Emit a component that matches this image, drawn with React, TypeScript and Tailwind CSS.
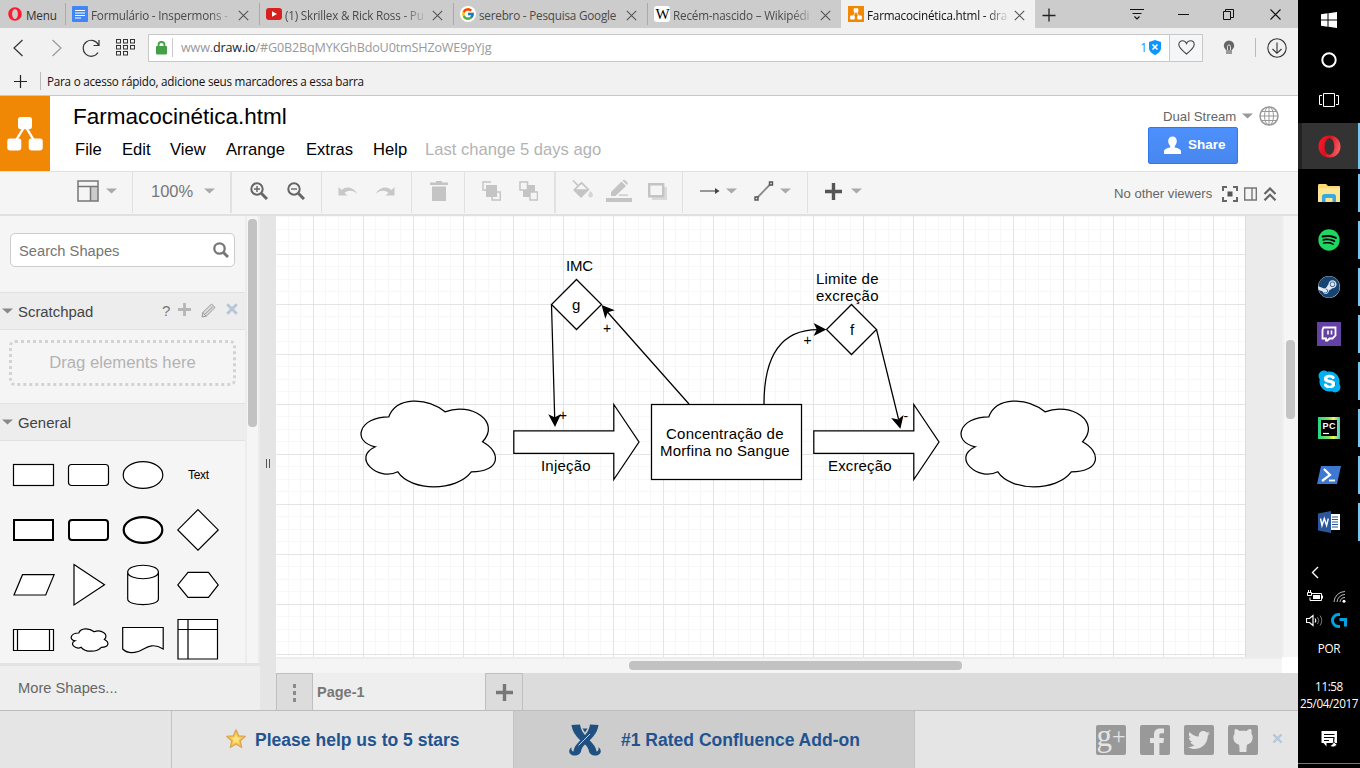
import React from "react";
import { FaSpotify, FaSteam, FaSkype, FaTwitter } from "react-icons/fa";
import { FcGoogle } from "react-icons/fc";

const uiFont = "font-['Open_Sans','Noto_Sans',sans-serif]";

function TabClose() {
  return (
    <svg width="11" height="11" viewBox="0 0 11 11" className="shrink-0">
      <path d="M.8 .8l9.400 9.400M10.200 .8L.8 10.200" stroke="#555" strokeWidth="1.100" fill="none" />
    </svg>
  );
}

function Tab({ icon, title, active = false, fade = false }: { icon: React.ReactNode; title: string; active?: boolean; fade?: boolean }) {
  return (
    <div className={`flex h-[28px] w-[194px] shrink-0 items-center ${active ? "bg-[#f1f1f1]" : ""}`}>
      <div className={`h-[22px] w-px ${active ? "bg-transparent" : "bg-[#a9a9a9]"}`} />
      <div className="ml-[6px] flex h-4 w-4 shrink-0 items-center justify-center">{icon}</div>
      <div
        className={`ml-[3px] mt-[3px] w-[145px] shrink-0 whitespace-nowrap text-[11.700px] tracking-[-0.200px] ${fade ? "[mask-image:linear-gradient(to_right,black_118px,transparent_143px)]" : ""} ${active ? "text-[#111]" : "text-[#4a4a4a]"}`}
      >
        {title}
      </div>
      <div className="ml-[2px] mt-[2px]">
        <TabClose />
      </div>
    </div>
  );
}

function DrawLogo({ size, radius }: { size: number; radius: number }) {
  return (
    <svg width={size} height={size} viewBox="0 0 37 35">
      <path d="M18.500 9L8 26M18.500 9L29 26" stroke="#fff" strokeWidth="2.400" />
      <rect x="11.300" y="0" width="14.400" height="12.500" rx={radius} fill="#fff" />
      <rect x="0.300" y="22" width="14.400" height="12.500" rx={radius} fill="#fff" />
      <rect x="22.300" y="22" width="14.400" height="12.500" rx={radius} fill="#fff" />
    </svg>
  );
}

function OperaO({ size, shaded = false }: { size: number; shaded?: boolean }) {
  const id = shaded ? "opera-shaded" : "opera-flat";
  return (
    <svg width={size} height={size} viewBox="0 0 24 24">
      <defs>
        <linearGradient id={id} x1="0" y1="0" x2="1" y2=".3">
          <stop offset="0" stopColor="#ff1b2d" />
          <stop offset=".5" stopColor={shaded ? "#d8101d" : "#ff1b2d"} />
          <stop offset="1" stopColor={shaded ? "#f4555a" : "#ff1b2d"} />
        </linearGradient>
      </defs>
      <path fillRule="evenodd" fill={`url(#${id})`} d="M12 .5C5.400 .5 .5 5.600 .5 12S5.400 23.500 12 23.500 23.500 18.400 23.500 12 18.600 .5 12 .5zM12 3.400c3 0 5 3.800 5 8.600s-2 8.600-5 8.600-5-3.800-5-8.600 2-8.600 5-8.600z" />
    </svg>
  );
}

function Caret({ color = "#999" }: { color?: string }) {
  return (
    <svg width="11" height="6" viewBox="0 0 11 6" className="shrink-0">
      <path d="M0 .5h11L5.500 5.500z" fill={color} />
    </svg>
  );
}

function BrowserTop() {
  return (
    <div className={uiFont}>
      <div className="flex h-[28px] items-center bg-[#cccccc]">
        <div className="flex w-[65px] items-center pl-[8px]">
          <OperaO size={14} />
          <span className="ml-[4px] mt-[3px] text-[11.700px] tracking-[-0.200px] text-[#333]">Menu</span>
        </div>
        <Tab
          title="Formulário - Inspermons -"
          fade
          icon={
            <svg width="16" height="16">
              <rect width="16" height="16" rx="1" fill="#4285f4" />
              <path d="M3 4.500h10M3 7h10M3 9.500h10M3 12h6" stroke="#fff" strokeWidth="1.200" />
            </svg>
          }
        />
        <Tab
          title="(1) Skrillex & Rick Ross - Pu"
          fade
          icon={
            <svg width="16" height="12">
              <rect width="16" height="12" rx="3" fill="#d8201f" />
              <path d="M6 3.200v5.600l5-2.800z" fill="#fff" />
            </svg>
          }
        />
        <Tab
          title="serebro - Pesquisa Google"
          icon={
            <span className="flex h-4 w-4 items-center justify-center rounded-full bg-white">
              <FcGoogle size={14} />
            </span>
          }
        />
        <Tab
          title="Recém-nascido – Wikipédi"
          fade
          icon={
            <span className="flex h-4 w-4 items-center justify-center rounded-[3px] bg-white font-['Liberation_Serif',serif] text-[15px] leading-none tracking-[-1px] text-black">W</span>
          }
        />
        <Tab
          active
          title="Farmacocinética.html - dra"
          fade
          icon={
            <span className="flex h-4 w-4 items-center justify-center bg-[#f08705]">
              <DrawLogo size={12} radius={2} />
            </span>
          }
        />
        <svg width="14" height="14" className="ml-[7px] mt-[2px]">
          <path d="M7 .5v13M.5 7.500h13" stroke="#222" strokeWidth="1.300" />
        </svg>
        <svg width="14" height="13" className="ml-[74px]">
          <path d="M0 1.500h14M2.500 5.500h9" stroke="#111" />
          <path d="M4.500 8.500L7 11l2.500-2.500" stroke="#111" fill="none" strokeWidth="1.200" />
        </svg>
        <svg width="11" height="3" className="ml-[34px]">
          <path d="M0 1.500h11" stroke="#111" />
        </svg>
        <svg width="11" height="11" className="ml-[34px]">
          <path d="M.5 2.500h7v8h-7zM2.500 2.500v-2h8v8h-3" stroke="#111" fill="none" />
        </svg>
        <svg width="11" height="11" className="ml-[36px]">
          <path d="M.5 .5l10 10M10.500 .5l-10 10" stroke="#111" strokeWidth="1.100" />
        </svg>
      </div>
      <div className="flex h-[39px] items-center bg-[#f1f1f1]">
        <svg width="11" height="18" className="ml-[13px]">
          <path d="M9.500 1L1 9l8.500 8" stroke="#333" fill="none" strokeWidth="1.200" />
        </svg>
        <svg width="11" height="18" className="ml-[27px]">
          <path d="M1.500 1L10 9l-8.500 8" stroke="#999" fill="none" strokeWidth="1.200" />
        </svg>
        <svg width="19" height="18" className="ml-[19px]">
          <path d="M17 13.500A8 8 0 1 1 17.500 6M18 1v5.500h-5.500" stroke="#333" fill="none" strokeWidth="1.200" />
        </svg>
        <svg width="20" height="17" className="ml-[16px]">
          {[0, 7, 14].map((x) => [0, 6, 12].map((y) => (x === 14 && y === 12 ? null : <rect key={`${x}-${y}`} x={x + 0.5} y={y + 0.5} width="4" height="3.500" fill="none" stroke="#333" />)))}
        </svg>
        <div className="ml-[12px] flex h-[28px] w-[1055px] items-center border border-[#c8c8c8] bg-white">
          <svg width="11" height="14" className="ml-[7px]">
            <path d="M2.500 6V4a3 3 0 0 1 6 0v2" stroke="#43a047" strokeWidth="1.800" fill="none" />
            <rect x="0" y="5" width="11" height="8.500" rx="1" fill="#43a047" />
          </svg>
          <div className="ml-[5px] h-[19px] w-px bg-[#ccc]" />
          <div className="ml-[8px] mt-px flex-1 whitespace-nowrap text-[12.600px] tracking-[-0.160px] text-[#999]">
            www.<span className="text-[#222]">draw.io</span>/#G0B2BqMYKGhBdoU0tmSHZoWE9pYjg
          </div>
          <span className="text-[12px] text-[#0a95ff]">1</span>
          <svg width="12" height="15" className="ml-[2px] mr-[8px]">
            <path d="M6 0l6 2v6c0 3.500-3 5.500-6 7C3 13.500 0 11.500 0 8V2z" fill="#0a95ff" />
            <path d="M3.500 4.500l5 5M8.500 4.500l-5 5" stroke="#fff" strokeWidth="1.600" />
          </svg>
          <div className="flex h-full w-[33px] items-center justify-center border-l border-[#c8c8c8] bg-[#f5f6f8]">
            <svg width="17" height="15" viewBox="0 0 17 15">
              <path d="M8.500 14C4 10.500 .8 7.700 .8 4.600.8 2.300 2.500.8 4.500.8c1.700 0 3.200 1 4 2.800.8-1.800 2.300-2.800 4-2.800 2 0 3.700 1.500 3.700 3.800 0 3.100-3.200 5.900-7.700 9.400z" fill="none" stroke="#444" strokeWidth="1.100" />
            </svg>
          </div>
        </div>
        <svg width="12" height="15" className="ml-[20px]">
          <path d="M6 .5a5.200 5.200 0 0 1 5.200 5.200c0 2.300-1.700 3-2.200 4.300H3C2.500 8.700 .8 8 .8 5.700A5.200 5.200 0 0 1 6 .5z" fill="#666" />
          <path d="M4.500 10V6.500a1.500 1.500 0 0 1 3 0V10" stroke="#ddd" fill="none" />
          <rect x="3" y="10" width="6" height="4" fill="#999" />
        </svg>
        <div className="ml-[20px] h-[19px] w-px bg-[#bbb]" />
        <svg width="20" height="20" className="ml-[11px]">
          <circle cx="10" cy="10" r="9.200" stroke="#333" fill="none" strokeWidth="1.100" />
          <path d="M10 4.500v10.500M5.500 11l4.500 4.300 4.500-4.300" stroke="#333" fill="none" strokeWidth="1.100" />
        </svg>
      </div>
      <div className="flex h-[29px] items-center border-b border-[#c8c8c8] bg-[#f1f1f1]">
        <svg width="13" height="13" className="ml-[14px]">
          <path d="M6.500 0v13M0 6.500h13" stroke="#222" strokeWidth="1.200" />
        </svg>
        <div className="ml-[13px] h-[18px] w-px bg-[#bbb]" />
        <span className="ml-[6px] mt-px text-[11.700px] tracking-[-0.240px] text-[#111]">Para o acesso rápido, adicione seus marcadores a essa barra</span>
      </div>
    </div>
  );
}

function AppHeader() {
  return (
    <div className="flex h-[75px] bg-white">
      <div className="flex h-[75px] w-[50px] items-center justify-center bg-[#f08705]">
        <DrawLogo size={36} radius={2.500} />
      </div>
      <div className="ml-[23px] flex-1 whitespace-nowrap">
        <div className="mt-[8px] text-[22.500px] leading-[26px] text-black">Farmacocinética.html</div>
        <div className="ml-[2px] mt-[10px] flex text-[16.600px] leading-[19px] text-black">
          <span className="w-[47px]">File</span>
          <span className="w-[48px]">Edit</span>
          <span className="w-[56px]">View</span>
          <span className="w-[80px]">Arrange</span>
          <span className="w-[67px]">Extras</span>
          <span className="w-[52px]">Help</span>
          <span className="text-[#b3b3b3]">Last change 5 days ago</span>
        </div>
      </div>
      <div className="mr-[19px] flex flex-col">
        <div className="mt-[10px] flex h-[20px] items-center pl-[15px] text-[13.200px] text-[#666]">
          <span className="mt-px w-[79px] whitespace-nowrap">Dual Stream</span>
          <Caret />
          <svg width="20" height="20" className="ml-[6px]" fill="none" stroke="#999">
            <circle cx="10" cy="10" r="9" strokeWidth="1.500" />
            <ellipse cx="10" cy="10" rx="4.500" ry="9" />
            <path d="M10 1v18M1 10h18M2.500 5.500h15M2.500 14.500h15" />
          </svg>
        </div>
        <div className="mt-px flex h-[37px] w-[90px] items-center rounded-[2px] border border-[#3079ed] bg-gradient-to-b from-[#4d90fe] to-[#4787ed] text-[13.500px] font-bold text-white">
          <svg width="19" height="19" className="ml-[14px]">
            <path d="M9.500 .5c2.500 0 4.300 1.800 4.300 4.500 0 2.200-.9 3.800-2 5v1.500c3.500.7 6.200 1.800 6.200 4V18H1v-2.500c0-2.200 2.700-3.300 6.200-4V10c-1.100-1.200-2-2.800-2-5C5.200 2.300 7 .5 9.500 .5z" fill="#fff" />
          </svg>
          <span className="ml-[6px]">Share</span>
        </div>
      </div>
    </div>
  );
}

function Sep({ wide = false }: { wide?: boolean }) {
  return <div className={`mt-[3px] h-[41px] shrink-0 bg-[#e1e1e1] ${wide ? "w-[2px]" : "w-px"}`} />;
}

function Toolbar() {
  return (
    <div className="flex h-[45px] items-center border-y border-b-2 border-[#e0e0e0] bg-[#f5f5f5] pb-[4px]">
      <div className="flex w-[132px] items-center pl-[77px]">
        <svg width="22" height="22" fill="none" stroke="#777" strokeWidth="1.500">
          <path d="M14 7h7v14h-7z" fill="#ccc" stroke="none" />
          <path d="M1 1h20v20H1zM1 6.500h20M13.500 6.500V21" />
        </svg>
        <span className="ml-[7px]"><Caret color="#aaa" /></span>
      </div>
      <Sep />
      <div className="flex w-[97px] items-center pl-[18px]">
        <span className="w-[53px] text-[16.500px] text-[#777]">100%</span>
        <Caret color="#aaa" />
      </div>
      <Sep wide />
      <div className="flex w-[89px] items-center gap-[19px] pl-[18px]">
        {[true, false].map((plus) => (
          <svg key={String(plus)} width="18" height="18" fill="none" stroke="#666">
            <circle cx="7" cy="7" r="5.700" strokeWidth="2" />
            <path d="M11.500 11.500l5.500 5.500" strokeWidth="3" />
            <path d={plus ? "M4 7h6M7 4v6" : "M4 7h6"} strokeWidth="1.400" />
          </svg>
        ))}
      </div>
      <Sep />
      <div className="flex w-[89px] items-center gap-[17px] pl-[16px]">
        <svg width="20" height="10">
          <path d="M.5 1v8.500h9L6.500 7C10 4 15 4 19.500 8 16 1.800 9-1 3.600 4z" fill="#c8c8c8" />
        </svg>
        <svg width="20" height="10">
          <path d="M19.500 1v8.500h-9l3-2.500C10 4 5 4 .5 8 4 1.800 11-1 16.400 4z" fill="#c8c8c8" />
        </svg>
      </div>
      <Sep />
      <div className="flex w-[52px] items-center pl-[18px]">
        <svg width="18" height="20" fill="#c4c4c4">
          <path d="M6 0h6v1.500h6V4H0V1.500h6zM2 5.500h14V20H2z" />
        </svg>
      </div>
      <Sep />
      <div className="flex w-[89px] items-center gap-[18px] pl-[17px]">
        <svg width="19" height="20" fill="none" stroke="#c4c4c4" strokeWidth="1.400">
          <path d="M9 1H1v8h3M15 11h3.300v8H10v-3" />
          <path d="M4 4h11v12H4z" fill="#c4c4c4" stroke="none" />
        </svg>
        <svg width="19" height="20" fill="none" stroke="#c4c4c4" strokeWidth="1.500">
          <path d="M4 4h12v12H4z" fill="#c4c4c4" stroke="none" />
          <path d="M1 1h7.500v8H1zM11 11h7.500v8H11z" fill="#f5f5f5" />
        </svg>
      </div>
      <Sep wide />
      <div className="flex w-[126px] items-center pl-[16px]">
        <svg width="21" height="19" fill="#c4c4c4" className="mb-[3px]">
          <path d="M1 .5l5 5" stroke="#c4c4c4" strokeWidth="1.600" />
          <path fillRule="evenodd" d="M9.500 1.500L17.500 9.500 9 18 1 10zM9.500 4L4 9.300h11z" />
          <path d="M18.700 11c1.500 2 2.200 3.200 2.200 4.300a2.300 2.300 0 0 1-4.600 0c0-1.100.9-2.300 2.400-4.300z" fill="#d5d5d5" />
        </svg>
        <svg width="26" height="24" className="ml-[13px]" fill="#c4c4c4">
          <path d="M5 13L15.500 2.500l4.500 4.500L9.500 17H5zM16.500 1.500c1-1 2-1 3 0l1.500 1.500c1 1 1 2 0 3z" />
          <path d="M13 15.500h9v1.200h-9zM0 19h26v4H0z" />
        </svg>
        <svg width="19" height="17" className="ml-[16px]">
          <path d="M4 4h15v13H4z" fill="#dadada" />
          <path d="M1.200 1.200h14v12h-14z" fill="#f5f5f5" stroke="#c4c4c4" strokeWidth="2.400" />
        </svg>
      </div>
      <Sep />
      <div className="flex w-[124px] items-center pl-[17px]">
        <svg width="20" height="8">
          <path d="M0 4h17" stroke="#777" strokeWidth="1.500" />
          <path d="M15 1L19.500 4 15 7z" fill="#444" />
        </svg>
        <span className="ml-[6px]"><Caret color="#aaa" /></span>
        <svg width="20" height="20" className="ml-[17px]">
          <path d="M2.500 17.500L17 2.500" stroke="#888" strokeWidth="1.800" />
          <path d="M1 16h3v3H1zM15.500 1h3v3h-3z" fill="#ddd" stroke="#555" strokeWidth="1.400" />
        </svg>
        <span className="ml-[6px]"><Caret color="#aaa" /></span>
      </div>
      <Sep />
      <div className="flex flex-1 items-center pl-[17px]">
        <svg width="17" height="17">
          <path d="M8.500 0v17M0 8.500h17" stroke="#555" strokeWidth="3.400" />
        </svg>
        <span className="ml-[9px]"><Caret color="#aaa" /></span>
      </div>
      <div className="mr-[21px] mt-[6px] flex items-center">
        <span className="w-[108px] whitespace-nowrap text-[13.100px] text-[#666]">No other viewers</span>
        <svg width="16" height="16" fill="none" stroke="#666" strokeWidth="2">
          <path d="M1 5V1h4M11 1h4v4M15 11v4h-4M5 15H1v-4" />
          <rect x="5.500" y="5.500" width="5" height="5" fill="#555" stroke="none" />
        </svg>
        <svg width="13" height="14" className="ml-[6px]" fill="none" stroke="#777" strokeWidth="1.400">
          <path d="M.7 1h11.600v12H.7zM8 1v12" />
        </svg>
        <svg width="14" height="14" className="ml-[6px]" fill="none" stroke="#666" strokeWidth="2.200">
          <path d="M1.500 7L7 1.500 12.500 7M1.500 13.300L7 7.800l5.500 5.500" />
        </svg>
      </div>
    </div>
  );
}

const cloudPath = (x: number, y: number, w: number, h: number) => {
  const p = (a: number, b: number) => `${x + a * w} ${y + b * h}`;
  return `M${p(0.25, 0.25)}C${p(0.05, 0.25)} ${p(0, 0.5)} ${p(0.16, 0.55)}C${p(0, 0.66)} ${p(0.18, 0.9)} ${p(0.31, 0.8)}C${p(0.4, 1)} ${p(0.7, 1)} ${p(0.8, 0.8)}C${p(1, 0.8)} ${p(1, 0.6)} ${p(0.875, 0.5)}C${p(1, 0.3)} ${p(0.8, 0.1)} ${p(0.625, 0.2)}C${p(0.5, 0.05)} ${p(0.3, 0.05)} ${p(0.25, 0.25)}Z`;
};

const shapes: React.ReactNode[] = [
  <rect x="7.500" y="17.500" width="40" height="21" />,
  <rect x="7.500" y="17.500" width="40" height="21" rx="3" />,
  <ellipse cx="27" cy="28" rx="19.800" ry="13.300" />,
  <text x="27.500" y="31.500" textAnchor="middle" fontSize="12" fill="#000" stroke="none" textLength="21">Text</text>,
  <rect x="8" y="18" width="39" height="20" strokeWidth="2" />,
  <rect x="8" y="18" width="39" height="20" rx="3" strokeWidth="2" />,
  <ellipse cx="27" cy="28" rx="19.300" ry="12.800" strokeWidth="2.200" />,
  <path d="M27 7.700l20.200 20.200L27 48.100 6.800 27.900z" />,
  <path d="M16.500 17.700h31.600L39.700 38H8z" />,
  <path d="M13 7.500l30.500 20.200L13 48z" />,
  <path d="M11.700 15v27c0 7.500 30.700 7.500 30.700 0V15c0-9-30.700-9-30.700 0c0 9 30.700 9 30.700 0" />,
  <path d="M17 15.400h20.500l9.700 12.500-9.700 12.500H17L6.800 27.900z" />,
  <path d="M7.500 17.500h40v21h-40zM11.500 17.500v21M43.500 17.500v21" />,
  <path d={cloudPath(7.500, 14.500, 41, 26)} />,
  <path d="M6.700 15.500h40.500v21.500c-12-7.500-18 0-25 2.500-6 2-12 1-15.500-2.500z" />,
  <path d="M7 7.500h39.500V47H7zM7 17.500h39.500M17 7.500V47" />,
];

function SectionHeader({ title, children }: { title: string; children?: React.ReactNode }) {
  return (
    <div className="flex h-[38px] items-center border-y border-[#e2e2e2] bg-[#ededed] pl-[2px]">
      <Caret color="#888" />
      <span className="ml-[5px] mt-[2px] w-[144px] text-[14.900px] text-[#444]">{title}</span>
      {children}
    </div>
  );
}

function Sidebar() {
  return (
    <div className="flex w-[260px] flex-col">
      <div className="flex h-[447px] overflow-hidden bg-[#f5f5f5]">
        <div className="flex w-[245px] flex-col">
          <div className="ml-[10px] mt-[17px] flex h-[34px] w-[225px] shrink-0 items-center rounded-[5px] border border-[#ccc] bg-white">
            <span className="ml-[8px] mt-[2px] w-[194px] text-[14.700px] text-[#757575]">Search Shapes</span>
            <svg width="16" height="16" fill="none" stroke="#777">
              <circle cx="6.500" cy="6.500" r="5.200" strokeWidth="2.300" />
              <path d="M10.500 10.500l4.500 4.500" strokeWidth="3" />
            </svg>
          </div>
          <div className="mt-[25px] shrink-0">
            <SectionHeader title="Scratchpad">
              <span className="mt-px w-[16px] text-[15px] text-[#777]">?</span>
              <svg width="13" height="13" className="mb-[3px]">
                <path d="M6.500 0v13M0 6.500h13" stroke="#b5b5b5" strokeWidth="2.800" />
              </svg>
              <svg width="15" height="15" className="mb-[2px] ml-[10px]" fill="#ddd" stroke="#999" strokeWidth="1">
                <path d="M1 14l.8-4.500L10.500 1l3.500 3.500-8.700 8.700zM1.800 9.500l3.500 3.700M4 11.300l8-8" />
              </svg>
              <svg width="12" height="12" className="mb-[5px] ml-[10px]">
                <path d="M1.200 1.200l9.600 9.600M10.800 1.200l-9.600 9.600" stroke="#b6c6d6" strokeWidth="2.800" />
              </svg>
            </SectionHeader>
          </div>
          <div className="ml-[9px] mt-[10px] flex h-[46px] w-[227px] shrink-0 items-center justify-center rounded-[6px] border-[3px] border-dotted border-[#d3d3d3] text-[16.700px] text-[#b3b3b3]">Drag elements here</div>
          <div className="mt-[17px] shrink-0">
            <SectionHeader title="General" />
          </div>
          <div className="ml-[6px] mt-[6px] grid w-[220px] shrink-0 grid-cols-[55px_55px_55px_55px]">
            {shapes.map((s, i) => (
              <svg key={i} width="55" height="55" fill="#fff" stroke="#000" strokeWidth="1.200">
                {s}
              </svg>
            ))}
          </div>
        </div>
        <div className="w-[15px] border-x-2 border-[#ececec] bg-[#f5f5f5] pl-px pt-[3px]">
          <div className="h-[208px] w-[9px] rounded-[4px] bg-[#c2c2c2]" />
        </div>
      </div>
      <div className="flex flex-1 items-center border-t-[3px] border-[#e3e3e3] bg-[#eeeeee] pl-[18px] pt-px text-[14.700px] text-[#666]">More Shapes...</div>
    </div>
  );
}

const range = (from: number, to: number, step: number) => Array.from({ length: Math.ceil((to - from) / step) }, (_, i) => from + i * step);

function Head({ x, y, a }: { x: number; y: number; a: number }) {
  return <path d="M0 0L-10 -5L-7.500 0L-10 5Z" fill="#000" stroke="#000" transform={`translate(${x} ${y}) rotate(${a})`} />;
}

function Label({ x, y, w, children, size = 15 }: { x: number; y: number; w: number; children: string; size?: number }) {
  return (
    <text x={x} y={y} textLength={w} fontSize={size} fill="#000" stroke="none">
      {children}
    </text>
  );
}

function Diagram() {
  return (
    <svg width="969" height="441" viewBox="276 216 969 441" className="block bg-white" fill="#fff" stroke="#000" strokeWidth="1.250">
      <g strokeWidth="1" shapeRendering="crispEdges">
        {range(275.500, 1246, 12.500).map((x) => <path key={x} d={`M${Math.floor(x) + 0.5} 216v441`} stroke="#f7f7f7" />)}
        {range(216.500, 657, 12.500).map((y) => <path key={y} d={`M276 ${Math.floor(y) + 0.5}h970`} stroke="#f7f7f7" />)}
        {range(313.500, 1246, 50).map((x) => <path key={x} d={`M${x} 216v441`} stroke="#e4e4e4" />)}
        {range(254.500, 657, 50).map((y) => <path key={y} d={`M276 ${y}h970`} stroke="#e4e4e4" />)}
      </g>
      <path d={cloudPath(351.300, 391.800, 150, 100)} />
      <path d={cloudPath(951.300, 391.800, 150, 100)} />
      <path d="M513.800 430.800h100v-26.300l25.200 37.500-25.200 37.500v-26.200h-100z" />
      <path d="M813.800 430.800h100v-26.300l25.200 37.500-25.200 37.500v-26.200h-100z" />
      <rect x="651.500" y="404.500" width="150" height="75" />
      <path d="M576.500 279.500l25 25-25 25-25-25z" />
      <path d="M851.500 304.500l25 25-25 25-25-25z" />
      <path d="M551.500 304.500L554.700 418M689 404L607 311.500M764 404Q764 329.500 818 329.500M876.500 329.500L898.500 419" fill="none" />
      <Head x={555} y={425.500} a={88.300} />
      <Head x={602.500} y={306} a={228.400} />
      <Head x={825} y={329.500} a={0} />
      <Head x={900} y={427.500} a={76.500} />
      <Label x={566} y={271} w={27}>IMC</Label>
      <Label x={572} y={310} w={8.300}>g</Label>
      <Label x={603} y={333} w={8} size={13.750}>+</Label>
      <Label x={559} y={420} w={8} size={13.750}>+</Label>
      <Label x={541} y={471} w={49.500}>Injeção</Label>
      <Label x={828} y={471} w={63.500}>Excreção</Label>
      <Label x={816} y={284} w={62.500}>Limite de</Label>
      <Label x={816} y={301} w={62.500}>excreção</Label>
      <Label x={850} y={335} w={4.200}>f</Label>
      <Label x={803.500} y={345} w={8} size={13.750}>+</Label>
      <Label x={903.500} y={421} w={4.600} size={13.750}>-</Label>
      <Label x={666} y={439} w={117.500}>Concentração de</Label>
      <Label x={660} y={456} w={129.500}>Morfina no Sangue</Label>
    </svg>
  );
}

function Editor() {
  return (
    <div className="flex min-w-0 flex-1 flex-col">
      <div className="flex h-[441px]">
        <Diagram />
        <div className="w-[37px] border-l border-[#dcdcdc] bg-[#ebebeb]" />
        <div className="w-[16px] border-l-2 border-[#efefef] bg-[#f5f5f5] pl-[2px] pt-[124px]">
          <div className="h-[79px] w-[9px] rounded-[4px] bg-[#c4c4c4]" />
        </div>
      </div>
      <div className="flex h-[16px]">
        <div className="w-[1006px] border-t-2 border-[#ededed] bg-[#f5f5f5] pl-[353px] pt-[2px]">
          <div className="h-[9px] w-[333px] rounded-[4px] bg-[#c2c2c2]" />
        </div>
        <div className="flex-1 bg-white" />
      </div>
      <div className="flex h-[37px] bg-[#dcdcdc]">
        <div className="flex w-[37px] flex-col items-center justify-center gap-[3px] border-l border-t border-r border-[#bfbfbf] pt-px">
          <i className="h-[4px] w-[3px] bg-[#8a8a8a]" />
          <i className="h-[4px] w-[3px] bg-[#8a8a8a]" />
          <i className="h-[4px] w-[3px] bg-[#8a8a8a]" />
        </div>
        <div className="w-[172px] bg-[#eeeeee] pl-[4px] text-[14.500px] font-bold leading-[39px] text-[#777]">Page-1</div>
        <div className="flex w-[38px] items-center justify-center border-l border-r border-t border-[#bfbfbf]">
          <svg width="17" height="17">
            <path d="M8.500 0v17M0 8.500h17" stroke="#777" strokeWidth="3.400" />
          </svg>
        </div>
      </div>
    </div>
  );
}

function Social({ children }: { children: React.ReactNode }) {
  return <div className="mr-[14px] flex h-[30px] w-[30px] items-end justify-center rounded-[2px] bg-[#999] text-[#e5e5e5]">{children}</div>;
}

function Footer() {
  return (
    <div className="flex h-[58px] items-center border-t border-[#bdbdbd] bg-[#e5e5e5] text-[17.550px] font-bold text-[#23538f]">
      <div className="h-full w-[171px]" />
      <div className="flex h-full w-[342px] items-center border-l border-[#c2c2c2] pl-[54px]">
        <svg width="20" height="20" viewBox="0 0 20 20" className="mb-[2px]">
          <path d="M10 .8l2.600 6 6.600.6-5 4.400 1.500 6.600L10 15l-5.700 3.400 1.500-6.600-5-4.400 6.600-.6z" fill="#f7c948" stroke="#dca554" strokeWidth="1.300" strokeLinejoin="round" />
          <path d="M10 5l1.500 3.500 3.500.4-2.700 2.300.8 3.500-3.100-1.800-3.100 1.800.8-3.500L5 8.900l3.500-.4z" fill="#fbe27f" />
        </svg>
        <span className="ml-[9px] mt-[2px] whitespace-nowrap">Please help us to 5 stars</span>
      </div>
      <div className="flex h-full w-[402px] items-center border-x border-[#c2c2c2] bg-[#cdcdcd] pl-[54px]">
        <svg width="34" height="32" viewBox="0 0 34 32" fill="#205081">
          <path d="M3.500 1L12 .5c.7 5 3 8.500 6.500 12.500C24 19 28 22 28.500 27.500c2-.5 2.500-2.500 1.800-4.500 4.500 3.500 2.500 8.500-3 8.500-3.500 0-6-1.500-6.500-5C20 22 15.500 19.500 11.500 15.500 7.500 11.500 4.500 7.500 3.500 1z" />
          <path d="M30.500 1L22 .5c-.7 5-3 8.500-6.500 12.500C10 19 6 22 5.500 27.500c-2-.5-2.500-2.500-1.800-4.500C-.8 26.500 1.200 31.500 6.700 31.500c3.500 0 6-1.500 6.500-5C14 22 18.500 19.500 22.500 15.500 26.500 11.500 29.500 7.500 30.500 1z" />
          <path d="M22 10L10.500 21.500" stroke="#cdcdcd" strokeWidth="1" />
          <path d="M14.500 4.500h5L17 8.500z" />
        </svg>
        <span className="ml-[19px] mt-[2px] whitespace-nowrap">#1 Rated Confluence Add-on</span>
      </div>
      <div className="flex flex-1 items-center pl-[181px]">
        <Social>
          <span className="flex h-[30px] w-[30px] items-start justify-center font-['Liberation_Serif',serif] font-normal">
            <span className="text-[31px] leading-[22px]">g</span>
            <span className="text-[24px] leading-[22px]">+</span>
          </span>
        </Social>
        <Social>
          <svg width="30" height="30" fill="#e5e5e5">
            <path d="M14 30V18h-4v-5h4V9.500C14 5.500 16.500 3.500 20 3.500h4v4.700h-2.700c-1.500 0-1.900.7-1.900 1.900V13H24l-.6 5h-4v12z" />
          </svg>
        </Social>
        <Social><FaTwitter size={22} className="mb-[4px]" /></Social>
        <Social>
          <svg width="30" height="30" fill="#e5e5e5">
            <path d="M7 4c2 0 3.300.9 4.500 2 2.300-.5 4.700-.5 7 0C19.700 4.900 21 4 23 4c.8 2 .6 3.500.3 4.600 1 1.300 1.500 2.800 1.300 4.700-.3 3.700-2.400 5.500-5.600 6.500-.3 1.500-.5 2.700-.5 4V27h-7v-3.200c0-1.300-.2-2.500-.5-4C7.800 18.800 5.700 17 5.400 13.300c-.2-1.900.3-3.400 1.300-4.700C6.400 7.500 6.200 6 7 4z" />
          </svg>
        </Social>
        <svg width="11" height="11" className="mb-[3px]">
          <path d="M1.500 1.500l8 8M9.500 1.500l-8 8" stroke="#b4c6d8" strokeWidth="2.300" />
        </svg>
      </div>
    </div>
  );
}

function Task({ children, active = false }: { children: React.ReactNode; active?: boolean }) {
  return (
    <div className={`mb-px flex h-[46px] shrink-0 items-center ${active ? "border-l-4 border-[#222] bg-[#333]" : "pl-[4px]"}`}>
      <div className="flex w-[54px] items-center justify-center">{children}</div>
      <div className={`ml-[2px] w-[2px] bg-[#76c8f0] ${active ? "h-[46px]" : "h-[38px]"}`} />
    </div>
  );
}

function Taskbar() {
  return (
    <div className={`flex h-[768px] w-[62px] flex-col bg-black text-white ${uiFont}`}>
      <div className="flex h-[40px] items-center justify-center">
        <svg width="16" height="16" fill="#fff">
          <path d="M0 2.200L6.500 1.300V7.500H0zM7.500 1.200L16 0v7.500H7.500zM0 8.500h6.500v6.200L0 13.800zM7.500 8.500H16V16l-8.500-1.200z" />
        </svg>
      </div>
      <div className="flex h-[40px] items-center justify-center">
        <svg width="16" height="16">
          <circle cx="8" cy="8" r="6.700" stroke="#fff" strokeWidth="2" fill="none" />
        </svg>
      </div>
      <div className="flex h-[43px] items-center justify-center pb-[3px]">
        <svg width="20" height="14" fill="none" stroke="#fff">
          <path d="M4.500 .5h11v13h-11zM3 2.500H.5v9H3M17 2.500h2.500v9H17" />
        </svg>
      </div>
      <Task active><OperaO size={23} shaded /></Task>
      <Task>
        <svg width="22" height="18">
          <path d="M0 1.500C0 .5 .5 0 1.500 0H8l2 2h11c.6 0 1 .4 1 1v15H0z" fill="#fbd96b" />
          <path d="M0 4h22v14H0z" fill="#fde596" />
          <path d="M4 18v-5.500C4 11 5 10 6.500 10h9c1.500 0 2.500 1 2.500 2.500V18h-3.500v-4h-7v4z" fill="#38a9e0" />
        </svg>
      </Task>
      <Task><span className="rounded-full bg-black text-[#1ed760]"><FaSpotify size={22} /></span></Task>
      <Task>
        <span className="h-[22px] w-[22px] rounded-full bg-[#dfe8f2] text-[#154372]"><FaSteam size={22} /></span>
      </Task>
      <Task>
        <span className="flex h-[24px] w-[24px] items-center justify-center bg-[#6441a5]">
          <svg width="16" height="16">
            <path d="M2.500 1.500H14.500V9.500L11.500 12.500H8.500L6.500 14.500H5V12.500H1.500V4z" fill="none" stroke="#fff" strokeWidth="1.800" />
            <path d="M7 4.500v4M10.500 4.500v4" stroke="#fff" strokeWidth="1.600" />
          </svg>
        </span>
      </Task>
      <Task>
        <span className="relative flex h-[23px] w-[23px] items-center justify-center text-[#00aff0]">
          <span className="absolute h-[14px] w-[12px] bg-white" />
          <FaSkype size={25} className="relative shrink-0" />
        </span>
      </Task>
      <Task>
        <svg width="22" height="22">
          <defs>
            <linearGradient id="pycharm-frame" x1="0" y1="0" x2="1" y2="0">
              <stop offset="0" stopColor="#21d789" />
              <stop offset=".5" stopColor="#8be35c" />
              <stop offset=".7" stopColor="#fcf84a" />
              <stop offset="1" stopColor="#31c8ce" />
            </linearGradient>
          </defs>
          <rect width="22" height="22" fill="url(#pycharm-frame)" />
          <rect x="3" y="3" width="16" height="16" fill="#000" />
          <path d="M5 16.500h6" stroke="#fff" strokeWidth="1.200" />
          <text x="4.500" y="12" fontSize="9" fontWeight="700" fill="#fff" fontFamily="Liberation Sans, sans-serif" textLength="13">PC</text>
        </svg>
      </Task>
      <Task>
        <svg width="24" height="18">
          <path d="M4 0h20l-4 18H0z" fill="#3e78d1" />
          <path d="M7 3l6 6-8 6" stroke="#fff" strokeWidth="2.200" fill="none" />
          <path d="M12 14.500h6" stroke="#fff" strokeWidth="1.800" />
        </svg>
      </Task>
      <Task>
        <svg width="22" height="22">
          <path d="M11 3h11v16H11z" fill="#fff" />
          <path d="M14 6h6M14 8.500h6M14 11h6M14 13.500h6M14 16h6" stroke="#2b579a" />
          <path d="M0 2.500L13 0v22L0 19.500z" fill="#2b579a" />
          <path d="M2.500 7.500l1.500 7 2.300-7 2.300 7 1.700-7" stroke="#fff" strokeWidth="1.400" fill="none" />
        </svg>
      </Task>
      <div className="mt-[20px] pl-[13px]">
        <svg width="8" height="13"><path d="M7 1L1.500 6.500 7 12" stroke="#fff" fill="none" strokeWidth="1.400" /></svg>
      </div>
      <div className="mt-[10px] flex h-[14px] items-center pl-[9px]">
        <svg width="16" height="12" fill="none" stroke="#fff">
          <path d="M5 3.500h9.500v7H3v-3M15.500 5.500v3M.5 2.500h4v3h-4zM1.500 0v2M3.500 0v2" />
          <path d="M6 5h7v4H6z" fill="#fff" stroke="none" />
        </svg>
        <svg width="13" height="13" className="ml-[10px]" fill="none" stroke="#bbb">
          <path d="M1 12A11 11 0 0 1 12 1.500M4 12a8 8 0 0 1 8-7.500M7 12a5 5 0 0 1 5-4.500" />
          <circle cx="11" cy="11.300" r="1.500" fill="#fff" stroke="none" />
        </svg>
      </div>
      <div className="mt-[9px] flex h-[16px] items-center pl-[8px]">
        <svg width="17" height="13" fill="none" stroke="#fff">
          <path d="M.5 4.500h3l3.500-3v10l-3.500-3h-3zM9 4.500q1.500 2 0 4" strokeWidth="1.200" />
          <path d="M11.500 3q2.500 3.500 0 7M14 1.500q3.500 5 0 10" stroke="#777" />
        </svg>
        <svg width="17" height="15" className="ml-[8px]" fill="none" stroke="#00a3e0" strokeWidth="3">
          <path d="M9 1.500H7.500a6 6 0 0 0 0 12H9M8.500 6.500h6V13.500" />
        </svg>
      </div>
      <div className="mt-[12px] text-center text-[11.700px] leading-[17px] tracking-[-0.200px]">POR</div>
      <div className="mt-[21px] text-center text-[11.700px] leading-[17px] tracking-[-0.400px]">
        11:58<br />25/04/2017
      </div>
      <div className="mt-[19px] flex justify-center">
        <svg width="17" height="17">
          <path d="M.5 0H16v12H5.500v3.500L2.500 12H.5z" fill="#fff" />
          <path d="M3 3.500h10.500M3 6.500h10.500M3 9.500h5" stroke="#000" strokeWidth="1.200" />
          <path d="M13 7a4 4 0 0 0 3 6 4 4 0 0 1-7 1.500C12 14 13 11 13 7z" fill="#fff" stroke="#000" strokeWidth=".8" />
        </svg>
      </div>
      <div className="mt-[15px] h-px bg-[#777]" />
    </div>
  );
}

export default function App() {
  return (
    <div className="flex h-[768px] w-[1360px] overflow-hidden font-['Liberation_Sans',Arial,sans-serif]">
      <div className="flex w-[1298px] flex-col">
        <BrowserTop />
        <AppHeader />
        <Toolbar />
        <div className="flex h-[494px]">
          <Sidebar />
          <div className="flex w-[16px] items-center justify-center bg-[#e5e5e5]">
            <div className="mt-px flex h-[9px] w-[4px] justify-between">
              <i className="w-px bg-[#555]" />
              <i className="w-px bg-[#555]" />
            </div>
          </div>
          <Editor />
        </div>
        <Footer />
      </div>
      <Taskbar />
    </div>
  );
}
